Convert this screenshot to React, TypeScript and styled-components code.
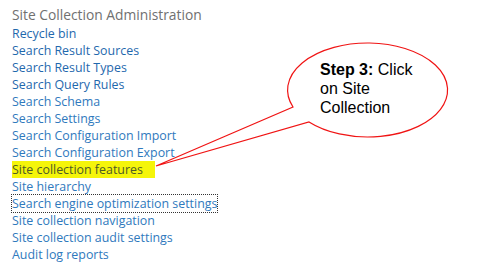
import styled, { createGlobalStyle } from 'styled-components'

const GlobalStyle = createGlobalStyle`
  html, body {
    margin: 0;
    padding: 0;
    background: #ffffff;
  }
`

const links = [
  { label: 'Recycle bin', strong: true },
  { label: 'Search Result Sources', strong: true },
  { label: 'Search Result Types', strong: true },
  { label: 'Search Query Rules', strong: true },
  { label: 'Search Schema' },
  { label: 'Search Settings' },
  { label: 'Search Configuration Import' },
  { label: 'Search Configuration Export' },
  { label: 'Site collection features', highlight: true },
  { label: 'Site hierarchy' },
  { label: 'Search engine optimization settings', focused: true },
  { label: 'Site collection navigation' },
  { label: 'Site collection audit settings' },
  { label: 'Audit log reports' },
]

const Page = styled.div`
  position: relative;
  width: 477px;
  height: 270px;
  overflow: hidden;
  background: #fff;
`

const Section = styled.div`
  display: flex;
  flex-direction: column;
  align-items: flex-start;
  padding: 5px 0 0 12px;
`

const Title = styled.div`
  font-family: 'Open Sans', 'Noto Sans', sans-serif;
  font-size: 13.8px;
  line-height: 19px;
  color: #707070;
`

const LinkList = styled.ul`
  list-style: none;
  margin: 1px 0 0;
  padding: 0;
  display: flex;
  flex-direction: column;
  align-items: flex-start;
`

const Link = styled.li<{ $strong?: boolean; $highlight?: boolean; $focused?: boolean }>`
  font-family: 'Open Sans', 'Noto Sans', sans-serif;
  font-size: 12.4px;
  line-height: 17px;
  height: 17px;
  box-sizing: border-box;
  color: ${(p) => (p.$highlight ? '#4d5a26' : p.$strong ? '#1f68ad' : '#2f79bd')};
  font-weight: ${(p) => (p.$strong ? 500 : 400)};
  background: ${(p) => (p.$highlight ? '#f5f50a' : 'transparent')};
  padding: ${(p) => (p.$highlight ? '0 12px 0 0' : '0')};
  outline: ${(p) => (p.$focused ? '1px dotted #333' : 'none')};
  outline-offset: 0;
  white-space: nowrap;
`

const Callout = styled.div`
  position: absolute;
  left: 150px;
  top: 40px;
  width: 310px;
  height: 140px;
`

const Bubble = styled.svg`
  position: absolute;
  left: 0;
  top: 0;
`

const CalloutText = styled.div`
  position: absolute;
  left: 170px;
  top: 20px;
  width: 110px;
  font-family: 'Liberation Sans', Arial, sans-serif;
  font-size: 16px;
  line-height: 19px;
  color: #000;

  b {
    font-weight: 700;
  }
`

export default function App() {
  return (
    <Page>
      <GlobalStyle />
      <Section>
        <Title>Site Collection Administration</Title>
        <LinkList>
          {links.map((l) => (
            <Link key={l.label} $strong={l.strong} $highlight={l.highlight} $focused={l.focused}>
              {l.label}
            </Link>
          ))}
        </LinkList>
      </Section>
      <Callout>
        <Bubble width="310" height="140" viewBox="0 0 310 140">
          <path
            d="M 143 67 A 80 47 0 1 1 159 82 L 6 126 Z"
            fill="#fff"
            stroke="#f01414"
            strokeWidth="1.2"
            strokeLinejoin="miter"
          />
        </Bubble>
        <CalloutText>
          <b>Step 3:</b> Click on Site Collection
        </CalloutText>
      </Callout>
    </Page>
  )
}
